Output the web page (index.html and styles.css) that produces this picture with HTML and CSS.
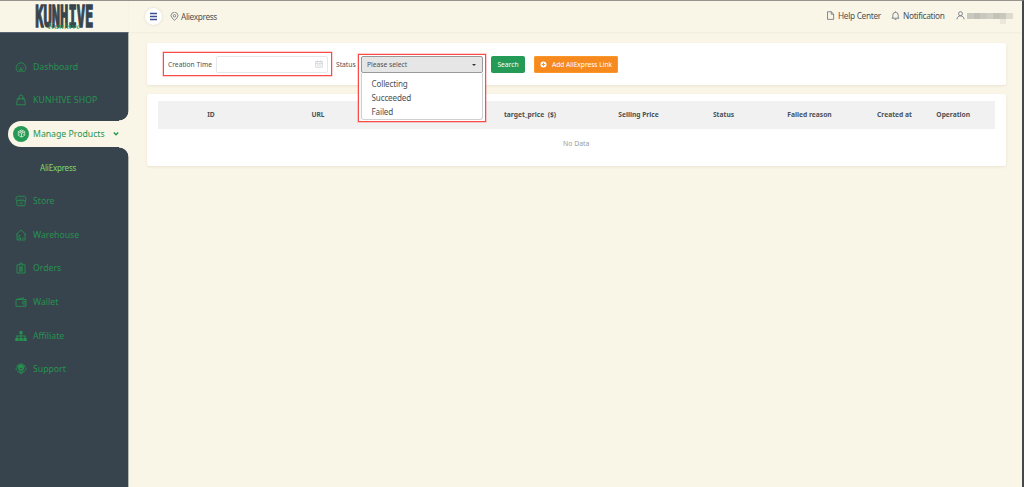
FILE: index.html
```html
<!DOCTYPE html>
<html lang="en">
<head>
<meta charset="utf-8">
<title>Kunhive - Aliexpress</title>
<link rel="stylesheet" href="styles.css">
</head>
<body>
<div class="app">
  <aside class="side">
    <div class="brand">
      <svg class="logo" viewBox="0 0 80 30">
        <text class="logo-main" transform="translate(1.200 25.200) scale(.46 1)">KUNHIVE</text>
        <text class="logo-script" x="14" y="26.500">Kunhive</text>
      </svg>
    </div>
    <nav class="menu">
      <a class="item"><svg class="ico" viewBox="0 0 12 12"><path d="M2.500 10.200a4.900 4.900 0 1 1 7 0zM2.800 6.800h1M8.200 6.800h1M4 4.300l.6.6M8 4.300l-.6.6M4.200 8.500h3.600M6 6v2.500"/></svg><span>Dashboard</span></a>
      <a class="item"><svg class="ico" viewBox="0 0 12 12"><path d="M2.400 4.700h7.200l.8 6.100H1.600zM4 6V3a2 2 0 0 1 4 0v3"/></svg><span class="shop">KUNHIVE SHOP</span></a>
      <div class="item active"><span class="disc"><svg class="ico" viewBox="0 0 12 12"><path d="M6 1.200l4.300 2.300v5L6 10.800 1.700 8.500v-5zM1.700 3.700L6 6l4.300-2.300M6 6v4.800M3.800 2.400l4.300 2.300M8.200 2.400L3.900 4.700M3.500 7v1M8.500 7v1"/></svg></span><span>Manage Products</span><svg class="chev" viewBox="0 0 8 6"><path d="M1.800 1.500L4 3.800l2.200-2.300"/></svg></div>
      <a class="item sub"><span>AliExpress</span></a>
      <a class="item"><svg class="ico" viewBox="0 0 12 12"><path d="M2.200 1.300h7.600Q11 1.300 11 4.500Q11 5.700 10 5.700H2Q1 5.700 1 4.500Q1 1.300 2.200 1.300zM3.500 4.200h1M5.500 4.200h1M7.500 4.200h1M1.800 5.700v4q0 1 1 1h6.400q1 0 1-1v-4M4.500 8.200h3"/></svg><span>Store</span></a>
      <a class="item"><svg class="ico" viewBox="0 0 12 12"><path d="M.8 5.800L6 1l5.200 4.800M2 5v6h8V5M4 10.500V6.500h1.500M5.500 10.500v-2M8 8.200v1.500"/></svg><span>Warehouse</span></a>
      <a class="item"><svg class="ico" viewBox="0 0 12 12"><path d="M2 2.800h8V11H2zM4.200 2.800a1.800 1.800 0 0 1 3.600 0M4 5h4M4 7h4M4 9h4M5 5v4M7 5v4"/></svg><span>Orders</span></a>
      <a class="item"><svg class="ico" viewBox="0 0 12 12"><path d="M1 3.500h10v6.800H1zM1.500 3.300l7-1.500.5 1.700M11 5.500H7.800V8H11M9 6.700h.5"/></svg><span>Wallet</span></a>
      <a class="item"><svg class="ico solid" viewBox="0 0 12 12"><path d="M4.500 1h3v3h-1v1.500h4V8h1.200v3H8.300V8h1.200V6.500h-3V8h1.200v3H4.300V8h1.200V6.500h-3V8h1.200v3H.3V8h1.200V5.500h4V4h-1z"/></svg><span>Affiliate</span></a>
      <a class="item"><svg class="ico" viewBox="0 0 12 12"><circle class="fillc" cx="6" cy="4.600" r="2.800"/><path d="M1.800 4.500C1.800-.2 10.200-.2 10.200 4.500M1.200 4.800v2.500M10.800 4.800v2.500M2 7.800l4 3 4-3M3.500 8L6 9.500 8.500 8"/><path class="smile" d="M4.500 5q1.500 1.600 3 0"/></svg><span>Support</span></a>
    </nav>
  </aside>
  <main class="main">
    <header class="top">
      <button class="burger"><svg viewBox="0 0 9 9"><path d="M1 1.500h7M1 4.500h7M1 7.500h7"/></svg></button>
      <div class="crumb"><svg class="tico" viewBox="0 0 10 10"><path d="M5 9.300L2.200 6.500a3.800 3.800 0 1 1 5.600 0z"/><circle cx="5" cy="4.200" r="1.400"/></svg><span>Aliexpress</span></div>
      <div class="links">
        <span class="link help"><svg class="tico" viewBox="0 0 10 10"><path d="M1.700.8h4.200l2.600 2.600v5.900H1.700zM5.800.8v2.800h2.700"/></svg><span>Help Center</span></span>
        <span class="link note"><svg class="tico" viewBox="0 0 10 10"><path d="M.8 8h8.400M2 8V4.500a3 3 0 0 1 6 0V8M5 .5v1M4 9.400h2"/></svg><span>Notification</span></span>
        <span class="link user"><svg class="tico" viewBox="0 0 10 10"><circle cx="5" cy="3" r="2.200"/><path d="M1 9.300c.2-5.200 7.800-5.200 8 0"/></svg><span class="mask"><i></i><i></i><i></i><i></i><i></i><i></i><i></i></span></span>
      </div>
    </header>
    <section class="card filters">
      <div class="time-box"><label>Creation Time</label><div class="date"><svg viewBox="0 0 8 8"><path d="M.7 1.500h6.600v5.700H.7zM.7 3.300h6.600M2.300.5v1.500M5.700.5v1.500M2 5h4"/></svg></div></div>
      <label class="status">Status</label>
      <div class="select-box">
        <div class="popup">
          <div class="select"><span>Please select</span><i class="caret"></i></div>
          <ul class="options"><li>Collecting</li><li>Succeeded</li><li>Failed</li></ul>
        </div>
      </div>
      <button class="btn search">Search</button>
      <button class="btn add"><svg viewBox="0 0 8 8"><circle cx="4" cy="4" r="3.500"/><path d="M4 2.200v3.600M2.200 4h3.600"/></svg><span>Add AliExpress Link</span></button>
    </section>
    <section class="card table">
      <div class="thead"><span>ID</span><span>URL</span><span></span><span>target_price&nbsp; ($)</span><span>Selling Price</span><span>Status</span><span>Failed reason</span><span>Created at</span><span>Operation</span></div>
      <div class="empty">No Data</div>
    </section>
  </main>
</div>
</body>
</html>
```
FILE: styles.css
```css
* { box-sizing: border-box; }
body { margin: 0; background: #faf6e7; font-family: "Noto Sans", "Open Sans", sans-serif; color: #4c5156; }
button { font: inherit; border: 0; padding: 0; }
svg { display: block; flex: none; fill: none; }
.app { display: flex; width: 1024px; height: 487px; overflow: hidden; border-top: 1px solid #96938c; border-right: 2px solid #45484b; }
.side { width: 129px; flex: none; display: flex; flex-direction: column; }
.brand { height: 31px; padding: 1px 0 0 34px; }
.logo { width: 80px; height: 30px; }
.logo-main { font: bold 30px "DejaVu Sans Mono", monospace; fill: #37444d; stroke: #37444d; stroke-width: 1.300; vector-effect: non-scaling-stroke; }
.logo-script { font: italic 9px "Liberation Serif", serif; letter-spacing: .4px; fill: #259a50; }
.menu { flex: 1; background: #37444d; border-top: 1px solid #596575; border-right: 1px solid #b9bab3; padding-top: 17px; }
.item { display: flex; align-items: center; height: 33.6px; padding-left: 15px; gap: 6px; font-size: 8.700px; color: #26924f; white-space: nowrap; }
.ico { width: 12px; height: 12px; stroke: #26924f; stroke-width: .85; }
.shop { letter-spacing: .1px; }
.solid { fill: #26924f; stroke: none; }
.fillc { fill: #26924f; }
.smile { stroke: #37444d; }
.active { position: relative; height: 26px; margin: 3.800px -1px 3.800px 8px; padding-left: 5px; gap: 4px; background: #faf6e7; border-radius: 13px 0 0 13px; }
.active::before, .active::after { content: ""; position: absolute; right: 0; width: 10px; height: 10px; }
.active::before { top: -10px; background: radial-gradient(circle at 0 0, #37444d 9px, #faf6e7 9.700px); }
.active::after { bottom: -10px; background: radial-gradient(circle at 0 100%, #37444d 9px, #faf6e7 9.700px); }
.disc { display: flex; align-items: center; justify-content: center; width: 16px; height: 16px; border-radius: 50%; background: #259a56; }
.disc .ico { width: 9px; height: 9px; stroke: #e6eedb; stroke-width: 1; }
.chev { width: 8px; height: 6px; margin-left: 3px; stroke: #259a56; stroke-width: 1.400; }
.sub { padding-left: 40px; font-size: 8px; letter-spacing: -.2px; color: #7fd96c; }
.main { flex: 1; min-width: 0; }
.top { display: flex; align-items: center; height: 31px; padding: 0 10px 0 16px; box-shadow: 0 1px 2px #e9e4d777; }
.burger { display: flex; align-items: center; justify-content: center; width: 17px; height: 17px; border-radius: 50%; background: #fff; box-shadow: 0 0 3px #d9d5ca; }
.burger svg { width: 9px; height: 9px; stroke: #3c4d91; stroke-width: 1.500; }
.crumb { display: flex; align-items: center; gap: 2px; margin-left: 8px; font-size: 8.300px; letter-spacing: -.35px; }
.tico { width: 9px; height: 9px; stroke: #66707c; stroke-width: .9; }
.links { display: flex; margin-left: auto; padding-bottom: 2px; font-size: 8.300px; letter-spacing: -.32px; align-items: center; }
.link { display: flex; align-items: center; gap: 3px; white-space: nowrap; }
.help { width: 65px; }
.note { width: 65px; }
.user { width: 56px; gap: 2px; }
.mask { display: flex; }
.mask i { width: 6.500px; height: 6px; background: #c9c8be; }
.mask i:nth-child(2) { background: #bfc0b8; }
.mask i:nth-child(4) { background: #d1cfc4; }
.mask i:nth-child(5) { background: #c3c3ba; }
.mask i:nth-child(6) { background: #cac8bd; box-shadow: 0 5px #ebe7da; }
.mask i:nth-child(7) { background: #dedacd; }
.card { margin-left: 18px; width: 859px; background: #fff; border-radius: 2px; box-shadow: 0 1px 3px #e8e3d2; }
.filters { display: flex; margin-top: 11px; height: 42px; padding-left: 16px; font-size: 6.700px; }
.time-box { display: flex; align-items: center; justify-content: space-between; width: 169px; height: 24px; margin-top: 9px; padding: 0 3px 0 4px; border: 1px solid #fa4c47; box-shadow: 0 0 0 .5px #fa4c4788; }
.date { display: flex; align-items: center; justify-content: flex-end; width: 112px; height: 17px; padding-right: 4px; border: 1px solid #e7e8eb; border-radius: 2px; }
.date svg { width: 8px; height: 8px; stroke: #c2c6ce; stroke-width: .7; }
.status { width: 22px; margin: 16.500px 0 0 4px; }
.select-box { position: relative; width: 128px; height: 24px; margin-top: 11px; }
.popup { position: absolute; left: 0; top: 0; width: 128px; height: 68px; padding: 1px 2px 0; border: 1px solid #fa4c47; box-shadow: 0 0 0 .5px #fa4c4788; background: #fff; z-index: 2; }
.select { display: flex; align-items: center; justify-content: space-between; height: 17px; padding: 0 6px 0 5px; background: #e6e6e6; border: 1px solid #999; border-radius: 2px; }
.caret { border: 2.500px solid transparent; border-top-color: #333; border-bottom: 0; }
.options { list-style: none; margin: 0; height: 47px; padding: 4px 9px 0 9.500px; border: 1px solid #cfd1d3; border-top: 0; border-radius: 0 0 3px 3px; font-size: 8.100px; letter-spacing: -.15px; line-height: 14px; }
.btn { height: 17px; margin-top: 13px; border-radius: 2px; color: #fff; }
.search { width: 34px; margin-left: 5px; background: #239a55; }
.add { display: flex; align-items: center; justify-content: center; gap: 5px; width: 84px; margin-left: 9px; background: #f68a1f; box-shadow: inset 0 0 0 .5px #ffa337; font-size: 6.600px; }
.add svg { width: 7px; height: 7px; fill: #fff; }
.add path { stroke: #f68a1f; stroke-width: 1.100; }
.table { margin-top: 9px; height: 72px; padding: 7px 11px 0 10.500px; }
.thead { display: grid; grid-template-columns: 107px 107px 106px 105px 112px 58px 114px 56px 1fr; align-items: center; height: 28px; padding-bottom: 1px; background: #f1f1f1; font-size: 6.700px; font-weight: bold; text-align: center; white-space: nowrap; }
.thead span:last-child { padding-right: 11px; }
.empty { padding-top: 9px; font-size: 6.900px; line-height: 12px; text-align: center; color: #999ca0; }
```
